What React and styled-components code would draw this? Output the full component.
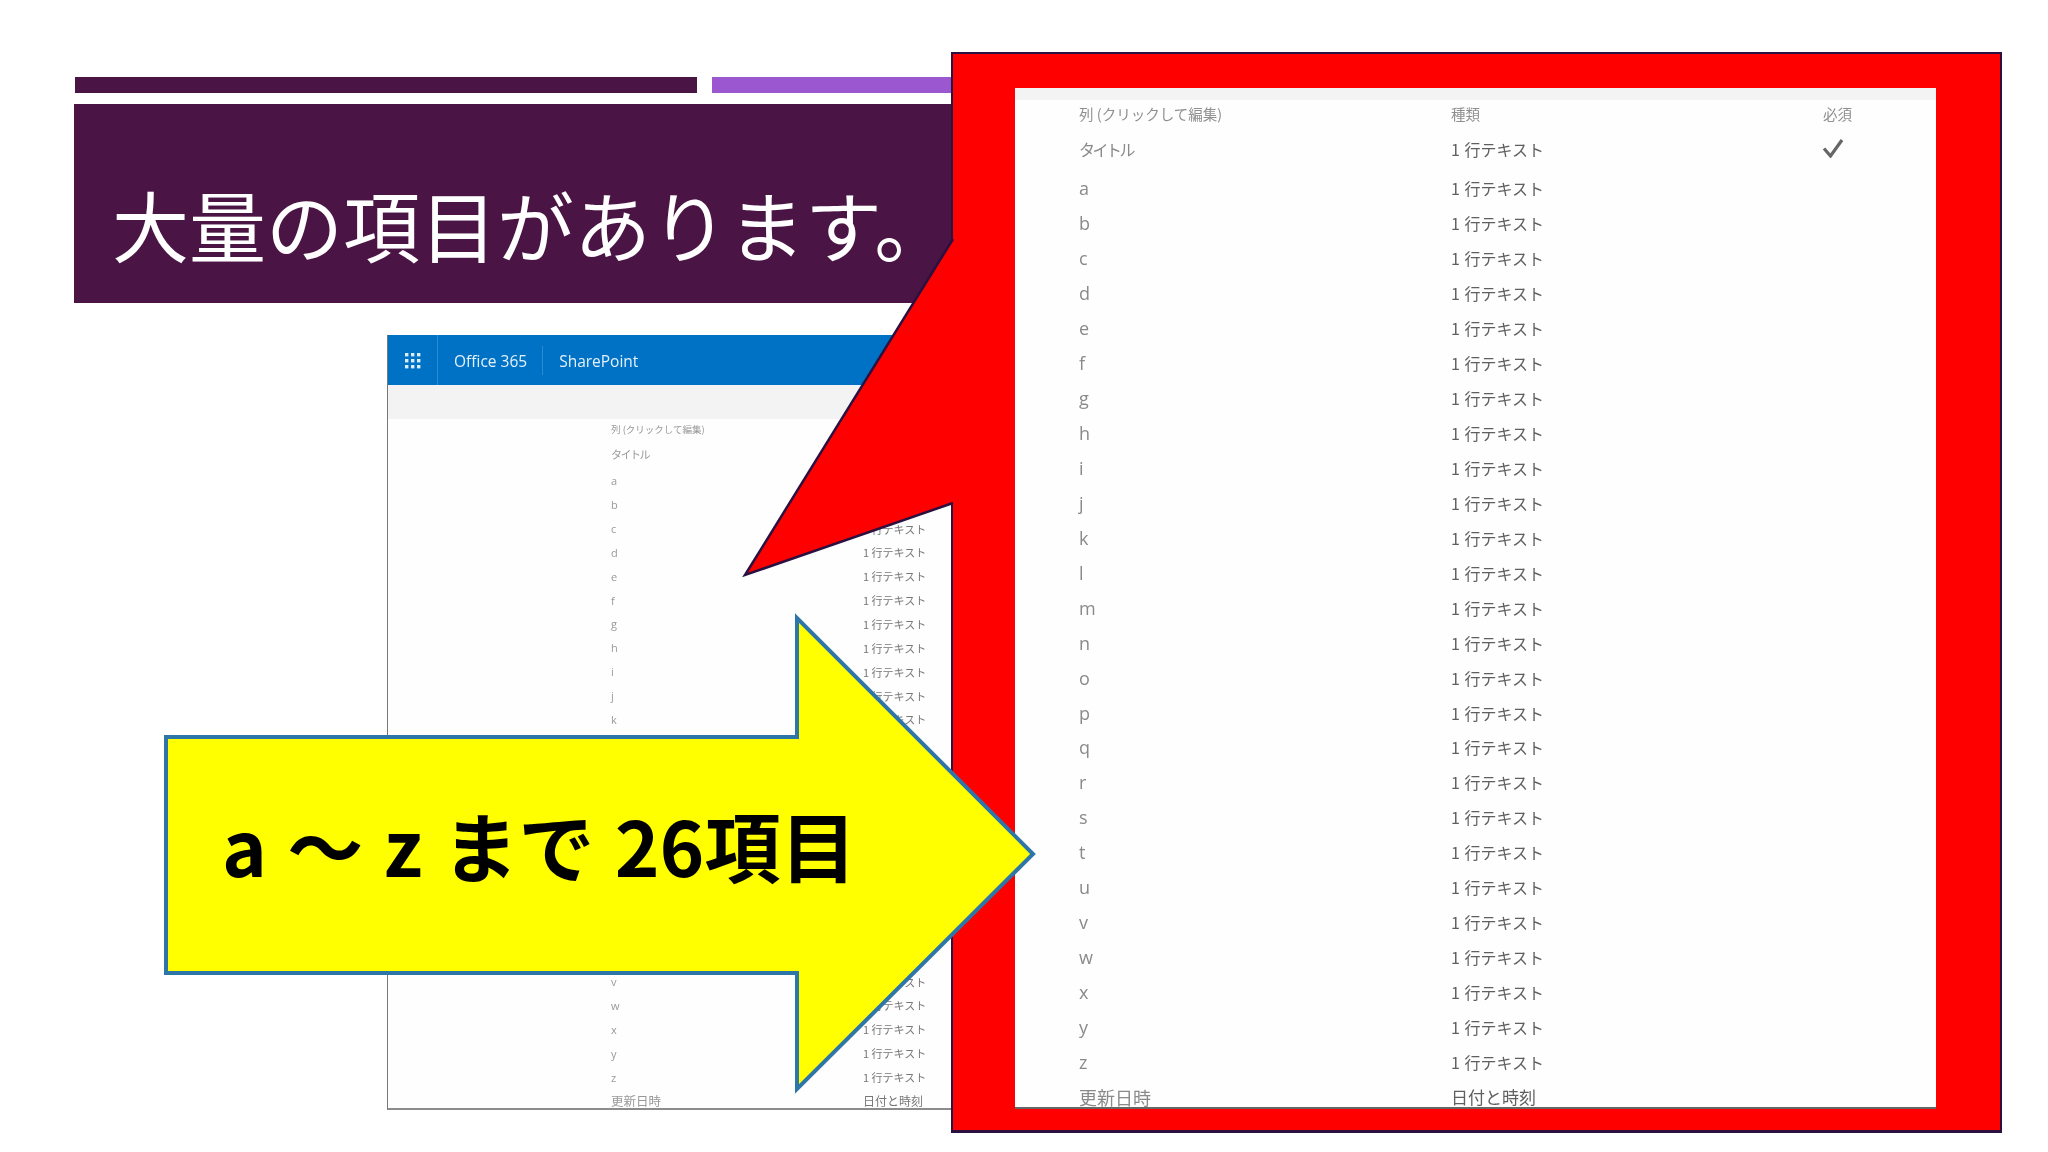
import styled, { createGlobalStyle } from 'styled-components';

const GlobalStyle = createGlobalStyle`
  html, body {
    margin: 0;
    background: #fff;
    overflow: hidden;
  }
`;

const Slide = styled.div`
  position: relative;
  width: 2048px;
  height: 1152px;
  padding: 77px 0 0 75px;
  box-sizing: border-box;
  background: #fff;
  overflow: hidden;
  font-family: "Noto Sans CJK JP", "Noto Sans", sans-serif;
`;

const TopBars = styled.div`
  display: flex;
  gap: 15px;
  height: 16px;
`;

const Bar = styled.div`
  width: ${({ $width }) => $width}px;
  background: ${({ $color }) => $color};
`;

const TitleBlock = styled.h1`
  width: 960px;
  height: 199px;
  margin: 11px 0 0 -1px;
  padding: 75px 0 0 38px;
  box-sizing: border-box;
  background: #4a1444;
  color: #fff;
  font-size: 77px;
  font-weight: 400;
  line-height: 90px;
  white-space: nowrap;
`;

const Shot = styled.div`
  width: 590px;
  height: 773px;
  margin: 32px 0 0 312px;
  border-left: 1px solid #777;
  border-bottom: 2px solid #8c8c8c;
  overflow: hidden;
`;

const ShotHeader = styled.div`
  display: flex;
  align-items: center;
  height: 50px;
  background: #0072c6;
  color: #e4f1fb;
  font-family: "Open Sans", sans-serif;
  font-size: 15.5px;
  filter: blur(0.4px);
`;

const Waffle = styled.div`
  display: flex;
  align-items: center;
  width: 50px;
  height: 100%;
  padding-left: 16px;
  box-sizing: border-box;
  border-right: 1px solid #2a8ad2;
  color: #dcecf9;
`;

const HeaderLabel = styled.span`
  padding: 1px 15px 0 16px;
  line-height: 28px;
  border-right: ${({ $divider }) => ($divider ? '1px solid #2a8ad2' : 'none')};
`;

const ShotStrip = styled.div`
  height: ${({ $height }) => $height}px;
  background: #f3f3f3;
`;

const ColumnTable = styled.div`
  padding-left: ${({ $left }) => $left}px;
  background: #fdfefd;
  filter: blur(${({ $blur }) => $blur}px);
  font-family: "Open Sans", "Noto Sans CJK JP", sans-serif;
  font-weight: 300;
`;

const Row = styled.div`
  display: grid;
  grid-template-columns: ${({ $columns }) => $columns};
  align-items: center;
  height: ${({ $height }) => $height}px;
  font-size: ${({ $size }) => $size}px;
  white-space: nowrap;
`;

const Name = styled.span`
  color: ${({ $color }) => $color || '#8a8a8a'};
  letter-spacing: ${({ $spacing }) => $spacing || 0}px;
  font-family: ${({ $cjk }) => ($cjk ? '"Noto Sans CJK JP", sans-serif' : 'inherit')};
  font-weight: 400;
`;

const Kind = styled.span`
  color: ${({ $color }) => $color || '#5f5f5f'};
  font-size: ${({ $size }) => ($size ? `${$size}px` : 'inherit')};
  word-spacing: ${({ $gap }) => $gap || 0}px;
  font-family: "Noto Sans CJK JP", sans-serif;
  font-weight: 400;
`;

const Callout = styled.div`
  position: absolute;
  left: 951px;
  top: 52px;
  width: 1051px;
  height: 1081px;
  padding: 34px 64px 21px 62px;
  box-sizing: border-box;
  background: #ff0000;
  border: 2px solid #2b1040;
  border-bottom-width: 3px;
`;

const CalloutTail = styled.svg`
  position: absolute;
  left: -212px;
  top: 178px;
  width: 216px;
  height: 350px;
`;

const ZoomPanel = styled.div`
  position: relative;
  height: 100%;
  overflow: hidden;
  background: #fdfefd;
  border-bottom: 2px solid #666;
  box-sizing: border-box;
`;

const CheckMark = styled.svg`
  display: block;
  width: 24px;
  height: 20px;
  margin: -3px 0 0 -2px;
`;

const Arrow = styled.div`
  position: absolute;
  left: 160px;
  top: 610px;
  width: 880px;
  height: 490px;
  display: flex;
  align-items: center;
  padding: 0 0 22px 62px;
  box-sizing: border-box;
`;

const ArrowShape = styled.svg`
  position: absolute;
  inset: 0;
  width: 100%;
  height: 100%;
`;

const ArrowLabel = styled.span`
  position: relative;
  color: #000;
  font-size: 76px;
  font-weight: 700;
  line-height: 1;
  word-spacing: 3px;
  white-space: nowrap;
`;

const letters = 'abcdefghijklmnopqrstuvwxyz'.split('');

const shotColumns = '252px 1fr';
const zoomColumns = '372px 372px 1fr';

const App = () => (
  <Slide>
    <GlobalStyle />
    <TopBars>
      <Bar $width={622} $color="#4a1444" />
      <Bar $width={400} $color="#9a57d0" />
    </TopBars>
    <TitleBlock>大量の項目があります。</TitleBlock>

    <Shot>
      <ShotHeader>
        <Waffle>
          <svg width="17" height="17" viewBox="0 0 17 17" fill="currentColor">
            {[1, 7, 13].flatMap((y) =>
              [1, 7, 13].map((x) => <rect key={`${x}-${y}`} x={x} y={y} width="3.4" height="3.4" />)
            )}
          </svg>
        </Waffle>
        <HeaderLabel $divider>Office 365</HeaderLabel>
        <HeaderLabel>SharePoint</HeaderLabel>
      </ShotHeader>
      <ShotStrip $height={34} />
      <ColumnTable $left={223} $blur={0.5}>
        <Row $columns={shotColumns} $height={20} $size={9.5}>
          <Name $cjk $color="#999">列 (クリックして編集)</Name>
          <Kind $color="#999">種類</Kind>
        </Row>
        <Row $columns={shotColumns} $height={30} $size={11}>
          <Name $cjk $spacing={-1.5} $color="#999">タイトル</Name>
          <Kind $color="#777">1 行テキスト</Kind>
        </Row>
        {letters.map((letter) => (
          <Row key={letter} $columns={shotColumns} $height={23.85} $size={11}>
            <Name $color="#999">{letter}</Name>
            <Kind $color="#777">1 行テキスト</Kind>
          </Row>
        ))}
        <Row $columns={shotColumns} $height={23.85} $size={12.5}>
          <Name $cjk $color="#999">更新日時</Name>
          <Kind $color="#777" $size={12}>日付と時刻</Kind>
        </Row>
      </ColumnTable>
    </Shot>

    <Callout>
      <CalloutTail viewBox="0 0 216 350">
        <polygon points="214,4 4,343 214,270" fill="#ff0000" />
        <polyline points="212,7 4,343 212,271" fill="none" stroke="#2b1040" strokeWidth="2.5" />
      </CalloutTail>
      <ZoomPanel>
        <ShotStrip $height={12} />
        <ColumnTable $left={64} $blur={0.4}>
          <Row $columns={zoomColumns} $height={27} $size={14.5}>
            <Name $cjk $color="#8f8f8f">列 (クリックして編集)</Name>
            <Kind $color="#8f8f8f">種類</Kind>
            <Kind $color="#8f8f8f">必須</Kind>
          </Row>
          <Row $columns={zoomColumns} $height={44} $size={16}>
            <Name $cjk $spacing={-2.5}>タイトル</Name>
            <Kind $gap={1}>1 行テキスト</Kind>
            <CheckMark viewBox="0 0 24 20">
              <path d="M3 10.5 L9.5 18 L21 2" fill="none" stroke="#666" strokeWidth="3.2" />
            </CheckMark>
          </Row>
          {letters.map((letter) => (
            <Row key={letter} $columns={zoomColumns} $height={34.95} $size={18}>
              <Name>{letter}</Name>
              <Kind $size={16} $gap={1}>1 行テキスト</Kind>
            </Row>
          ))}
          <Row $columns={zoomColumns} $height={34.95} $size={18}>
            <Name $cjk>更新日時</Name>
            <Kind $size={17}>日付と時刻</Kind>
          </Row>
        </ColumnTable>
      </ZoomPanel>
    </Callout>

    <Arrow>
      <ArrowShape viewBox="0 0 880 490">
        <polygon
          points="6,127 637,127 637,8 873,244 637,479 637,363 6,363"
          fill="#ffff00"
          stroke="#2e75a8"
          strokeWidth="4"
        />
      </ArrowShape>
      <ArrowLabel>a ～ z まで 26項目</ArrowLabel>
    </Arrow>
  </Slide>
);

export default App;
